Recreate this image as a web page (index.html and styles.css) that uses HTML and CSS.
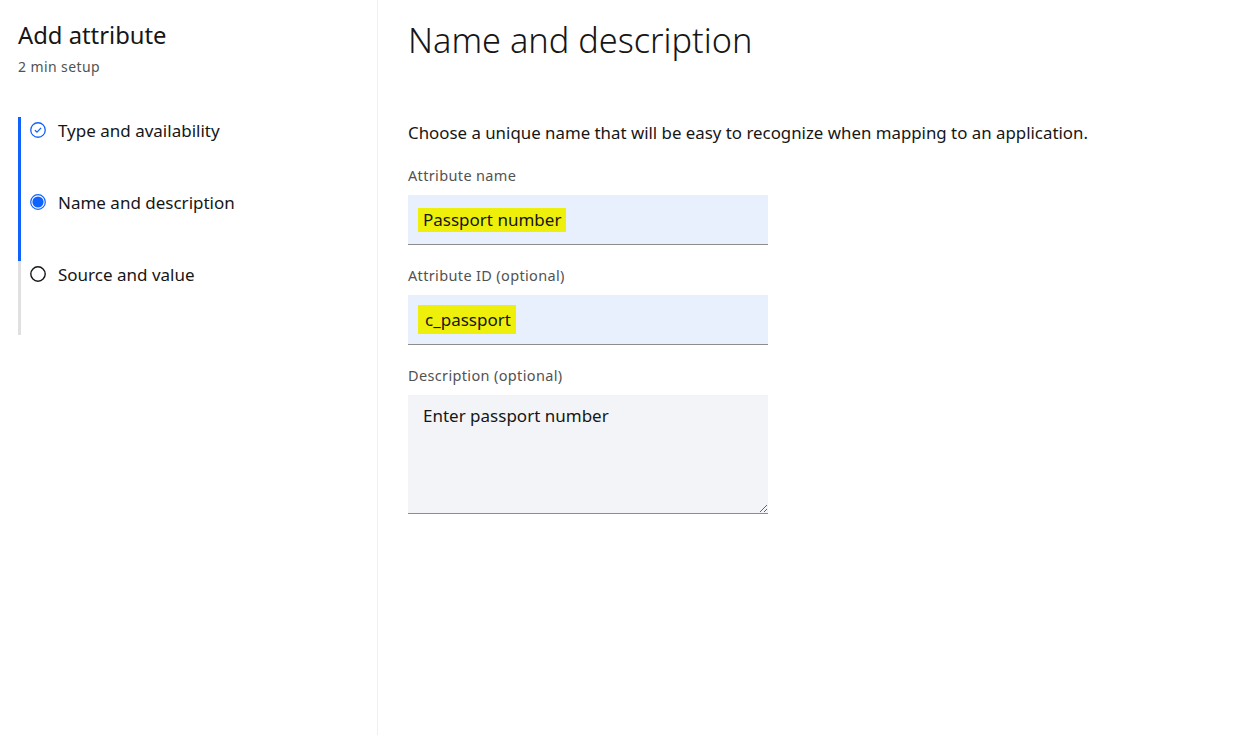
FILE: index.html
```html
<!DOCTYPE html>
<html lang="en">
<head>
    <meta charset="utf-8">
    <title>Add attribute</title>
    <link rel="stylesheet" href="styles.css">
</head>
<body>
<div class="page">
    <div class="side">
        <h2 class="side-title">Add attribute</h2>
        <p class="side-sub">2 min setup</p>
        <ul class="steps">
            <li class="step done">
                <svg class="step-icon" width="16" height="16" viewBox="0 0 16 16">
                    <circle cx="8" cy="8" r="7.25" fill="none" stroke="#0f62fe" stroke-width="1.3"/>
                    <path d="M4.9 8.2 L7 10.2 L11.1 5.9" fill="none" stroke="#0f62fe" stroke-width="1.3"/>
                </svg>
                <span>Type and availability</span>
            </li>
            <li class="step current">
                <svg class="step-icon" width="16" height="16" viewBox="0 0 16 16">
                    <circle cx="8" cy="8" r="7.3" fill="none" stroke="#0f62fe" stroke-width="1.2"/>
                    <circle cx="8" cy="8" r="5.6" fill="#0f62fe"/>
                </svg>
                <span>Name and description</span>
            </li>
            <li class="step">
                <svg class="step-icon" width="16" height="16" viewBox="0 0 16 16">
                    <circle cx="8" cy="8" r="7.2" fill="none" stroke="#161616" stroke-width="1.4"/>
                </svg>
                <span>Source and value</span>
            </li>
        </ul>
    </div>
    <div class="main">
        <h1 class="title">Name and description</h1>
        <p class="intro">Choose a unique name that will be easy to recognize when mapping to an application.</p>

        <div class="form-item">
            <label class="label">Attribute name</label>
            <div class="field filled"><span class="hl">Passport number</span></div>
        </div>
        <div class="form-item">
            <label class="label">Attribute ID (optional)</label>
            <div class="field filled"><span class="hl hl2">c_passport</span></div>
        </div>
        <div class="form-item">
            <label class="label">Description (optional)</label>
            <textarea class="area">Enter passport number</textarea>
        </div>
    </div>
</div>
</body>
</html>
```

FILE: styles.css
```css
* {
    margin: 0;
    padding: 0;
    box-sizing: border-box;
}
body {
    font-family: "Noto Sans", "Liberation Sans", sans-serif;
    color: #161616;
    background: #fff;
}
ul, li {
    list-style: none;
}
.page {
    display: flex;
    height: 735px;
}
.side {
    width: 378px;
    border-right: 1px solid #f0f0f0;
    padding: 20px 0 0 18px;
}
.side-title {
    font-size: 23.8px;
    font-weight: 400;
    line-height: 30px;
}
.side-sub {
    font-size: 14px;
    line-height: 18px;
    margin-top: 8px;
    color: #525252;
    letter-spacing: 0.4px;
}
.steps {
    margin-top: 41px;
    width: 300px;
}
.step {
    display: flex;
    align-items: flex-start;
    height: 72px;
    border-left: 3px solid #e0e0e0;
    padding: 4px 0 0 9px;
}
.step.done, .step.current {
    border-left-color: #0f62fe;
}
.step:last-child {
    height: 74px;
}
.step-icon {
    flex: none;
    margin: 1px 12px 0 0;
}
.step span {
    font-size: 17px;
    line-height: 20px;
}
.main {
    flex: 1;
    padding: 20px 0 0 30px;
}
.title {
    font-size: 34.3px;
    font-weight: 300;
    line-height: 40px;
}
.intro {
    font-size: 16.85px;
    line-height: 24px;
    margin-top: 61px;
}
.form-item {
    margin-top: 22px;
    width: 360px;
}
.label {
    display: block;
    font-size: 14.5px;
    line-height: 16px;
    color: #525252;
    margin-bottom: 12px;
    letter-spacing: 0.35px;
}
.field {
    height: 50px;
    border-bottom: 1px solid #8d8d8d;
    background: #f2f4f8;
    display: flex;
    align-items: center;
    padding: 0 10px;
    font-size: 17px;
}
.field.filled {
    background: #e8f0fe;
}
.hl {
    background: #eef00c;
    padding: 2px 5px;
    line-height: 20px;
}
.hl2 {
    padding: 5px 5px 4px 7px;
}
.area {
    display: block;
    width: 360px;
    height: 119px;
    border: 0;
    border-bottom: 1px solid #8d8d8d;
    background: #f2f4f8;
    font-family: inherit;
    font-size: 17px;
    line-height: 22px;
    color: #161616;
    padding: 10px 15px;
    outline: none;
}
```
